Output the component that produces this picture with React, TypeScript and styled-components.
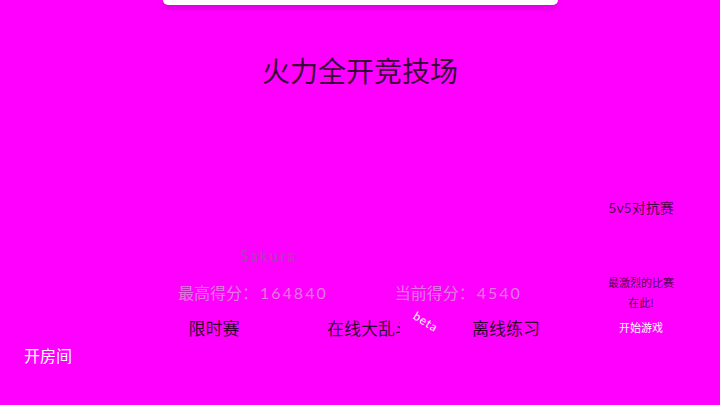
import React from "react";
import styled, { createGlobalStyle } from "styled-components";

const GlobalStyle = createGlobalStyle`
  html, body {
    margin: 0;
    padding: 0;
    background: #ff00ff;
  }
  body {
    font-family: "Lato", "Noto Sans CJK SC", sans-serif;
  }
`;

const Page = styled.div`
  width: 720px;
  height: 405px;
  display: flex;
  flex-direction: column;
  overflow: hidden;
  background: #ff00ff;
`;

const TopBar = styled.div`
  width: 395px;
  height: 5px;
  margin: 0 auto;
  background: #ffffff;
  border-radius: 0 0 5px 5px;
  box-shadow: 0 2px 6px rgba(90, 0, 90, 0.35);
`;

const Title = styled.h1`
  margin: 46px 0 0;
  font-family: "Noto Sans CJK SC", sans-serif;
  font-weight: 400;
  font-size: 28px;
  line-height: 39px;
  text-align: center;
  color: rgba(0, 0, 0, 0.8);
`;

const Body = styled.div`
  display: flex;
  height: 250px;
`;

const Main = styled.div`
  width: 438px;
  margin-left: 141px;
  padding-top: 155px;
  display: flex;
  flex-direction: column;
`;

const PlayerName = styled.div`
  padding-left: 99px;
  font-size: 16px;
  line-height: 20px;
  letter-spacing: 1.6px;
  color: rgba(110, 110, 130, 0.6);
`;

const StatsRow = styled.div`
  margin-top: 17px;
  display: flex;
  gap: 67px;
  padding-left: 37px;
`;

const Stat = styled.div`
  font-size: 16px;
  line-height: 22px;
  color: rgba(205, 200, 205, 0.62);
  white-space: nowrap;
  span {
    margin-left: 2px;
    letter-spacing: 2px;
  }
`;

const ModeRow = styled.div`
  margin-top: 12px;
  display: grid;
  grid-template-columns: repeat(3, 146px);
`;

const ModeCell = styled.div<{ $clip?: boolean }>`
  position: relative;
  display: flex;
  justify-content: ${(p) => (p.$clip ? "flex-start" : "center")};
  padding-left: ${(p) => (p.$clip ? "40px" : "0")};
`;

const ModeButton = styled.div<{ $width?: number }>`
  font-family: "Noto Sans CJK SC", sans-serif;
  font-size: 17px;
  line-height: 24px;
  color: rgba(0, 0, 0, 0.82);
  white-space: nowrap;
  overflow: hidden;
  width: ${(p) => (p.$width ? `${p.$width}px` : "auto")};
`;

const Beta = styled.span`
  position: absolute;
  left: 131px;
  top: -7px;
  font-size: 12px;
  line-height: 14px;
  letter-spacing: 0.8px;
  color: #ffffff;
  transform: rotate(32deg);
  transform-origin: left top;
`;

const Side = styled.div`
  width: 100px;
  margin-left: 12px;
  padding-top: 108px;
  display: flex;
  flex-direction: column;
  align-items: center;
  text-align: center;
`;

const SideTitle = styled.div`
  font-size: 14px;
  line-height: 20px;
  color: rgba(0, 0, 0, 0.72);
`;

const SideText = styled.div<{ $first?: boolean }>`
  margin-top: ${(p) => (p.$first ? "54px" : "0")};
  font-family: "Noto Sans CJK SC", sans-serif;
  font-size: 11px;
  line-height: 20px;
  color: rgba(0, 0, 0, 0.72);
`;

const StartButton = styled.div`
  margin-top: 5px;
  font-family: "Noto Sans CJK SC", sans-serif;
  font-size: 11px;
  line-height: 20px;
  color: #ffffff;
`;

const Footer = styled.div`
  margin-top: 4px;
  padding-left: 24px;
  font-family: "Noto Sans CJK SC", sans-serif;
  font-size: 16px;
  line-height: 22px;
  color: #ffffff;
`;

export default function App() {
  return (
    <>
      <GlobalStyle />
      <Page>
        <TopBar />
        <Title>火力全开竞技场</Title>
        <Body>
          <Main>
            <PlayerName>Sakura</PlayerName>
            <StatsRow>
              <Stat>
                最高得分：<span>164840</span>
              </Stat>
              <Stat>
                当前得分：<span>4540</span>
              </Stat>
            </StatsRow>
            <ModeRow>
              <ModeCell>
                <ModeButton>限时赛</ModeButton>
              </ModeCell>
              <ModeCell $clip>
                <ModeButton $width={73}>在线大乱斗</ModeButton>
                <Beta>beta</Beta>
              </ModeCell>
              <ModeCell>
                <ModeButton>离线练习</ModeButton>
              </ModeCell>
            </ModeRow>
          </Main>
          <Side>
            <SideTitle>5v5对抗赛</SideTitle>
            <SideText $first>最激烈的比赛</SideText>
            <SideText>在此!</SideText>
            <StartButton>开始游戏</StartButton>
          </Side>
        </Body>
        <Footer>开房间</Footer>
      </Page>
    </>
  );
}
